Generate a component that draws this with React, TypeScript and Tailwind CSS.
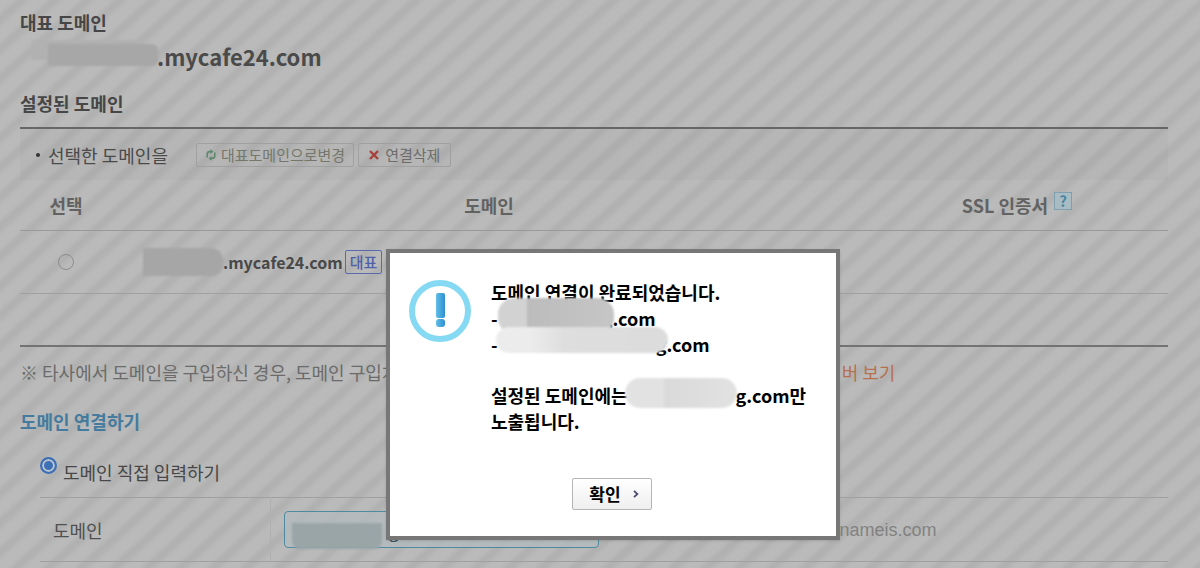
import React from 'react';

function RefreshIcon() {
    return (
        <svg viewBox="0 0 12 14" className="w-3 h-3.5 shrink-0" fill="none" stroke="#5f8a70" strokeWidth="1.6">
            <path d="M2.2 9.5V6.2Q2.2 3.6 4.8 3.6H6" />
            <path d="M5.4 1.2 8.4 3.6 5.4 6Z" fill="#5f8a70" stroke="none" />
            <path d="M9.8 4.5v3.3q0 2.6-2.6 2.6H6" />
            <path d="M6.6 8 3.6 10.4 6.6 12.8Z" fill="#5f8a70" stroke="none" />
        </svg>
    );
}

function CrossIcon() {
    return (
        <svg viewBox="0 0 10 10" className="w-2.5 h-2.5 shrink-0" stroke="#a8403c" strokeWidth="2.4">
            <path d="M1 1 9 9M9 1 1 9" />
        </svg>
    );
}

function NoticeIcon() {
    return (
        <svg viewBox="0 0 62 62" className="w-[62px] h-[62px] shrink-0">
            <defs>
                <linearGradient id="mark" x1="0" x2="1">
                    <stop offset="0" stopColor="#62bfe8" />
                    <stop offset="1" stopColor="#2c8fd0" />
                </linearGradient>
            </defs>
            <circle cx="31" cy="31" r="28" fill="none" stroke="#85d9f3" strokeWidth="6" />
            <rect x="27" y="13" width="9" height="25" rx="2" fill="url(#mark)" />
            <rect x="27" y="39" width="9" height="8" rx="3" fill="url(#mark)" />
        </svg>
    );
}

function Smudge({ className }: { className: string }) {
    return <span aria-hidden="true" className={`absolute blur-[1px] ${className}`} />;
}

function DomainTable() {
    return (
        <table className="w-full table-fixed border-collapse text-[#626262]">
            <thead>
                <tr className="h-[50px] border-b border-[#999]">
                    <th className="w-[92px] font-bold">선택</th>
                    <th className="font-bold">도메인</th>
                    <th className="w-[302px] font-bold">
                        <span className="flex justify-center gap-1.5">
                            SSL 인증서
                            <button
                                type="button"
                                aria-label="SSL 인증서 도움말"
                                className="w-[18px] h-[18px] border border-[#7fa0ae] bg-[#a9bcc4] text-[#4a86a3] text-[15px] leading-4 font-bold"
                            >
                                ?
                            </button>
                        </span>
                    </th>
                </tr>
            </thead>
            <tbody>
                <tr className="h-[63px] border-b border-[#a0a0a0]">
                    <td>
                        <input
                            type="radio"
                            name="selected"
                            aria-label="mycafe24.com 선택"
                            className="appearance-none block mx-auto w-4 h-4 rounded-full border border-[#8c8c8c]"
                        />
                    </td>
                    <td className="pl-[31px]">
                        <div className="flex items-center gap-0.5">
                            <span className="relative w-[78px] h-7">
                                <Smudge className="inset-y-0 left-0 w-20 bg-[#a6a6a6] rounded-r-xl" />
                            </span>
                            <strong className="text-base leading-6 font-bold text-[#484848]">.mycafe24.com</strong>
                            <span className="border border-[#5a6bac] rounded-xs px-1 text-[15px] leading-[22px] text-[#4f62a8] font-medium">대표</span>
                        </div>
                    </td>
                    <td />
                </tr>
            </tbody>
            <tfoot>
                <tr className="h-[53px] border-b-2 border-[#737373]">
                    <td colSpan={3} />
                </tr>
            </tfoot>
        </table>
    );
}

function ConnectForm() {
    return (
        <section>
            <h2 className="mt-[23px] font-bold text-[#457b9e]">도메인 연결하기</h2>
            <div className="pl-5">
                <label className="mt-[23px] flex items-start gap-1.5 text-[#474747]">
                    <input
                        type="radio"
                        name="method"
                        defaultChecked
                        className="appearance-none w-[17px] h-[17px] rounded-full border-2 border-[#3e70b5] bg-[#3e70b5] shadow-[inset_0_0_0_2px_#bcc4cf]"
                    />
                    <span className="mt-0.5">도메인 직접 입력하기</span>
                </label>
                <table className="mt-3 w-full border-collapse border-y border-[#a0a0a0]">
                    <tbody>
                        <tr className="h-16">
                            <th className="w-[230px] pl-[13px] text-left font-normal text-[#505050] border-r border-[#b0b0b0]">
                                <label htmlFor="domain">도메인</label>
                            </th>
                            <td className="pl-[13px]">
                                <div className="flex items-center">
                                    <div className="relative w-[315px]">
                                        <input
                                            id="domain"
                                            type="text"
                                            defaultValue="g"
                                            className="block w-full h-[37px] pl-[104px] pr-2 rounded-sm border border-[#4f8ba0] bg-[#b3bcbf]/70 text-[#3c5560]"
                                        />
                                        <Smudge className="left-2 top-3 w-[90px] h-[26px] bg-[#9aa5a8] rounded-b-lg" />
                                    </div>
                                    <span className="w-[338px] text-right text-[#828282] font-['Liberation_Sans',sans-serif]">nameis.com</span>
                                </div>
                            </td>
                        </tr>
                    </tbody>
                </table>
            </div>
        </section>
    );
}

function NoticeDialog() {
    return (
        <div
            role="alertdialog"
            aria-labelledby="notice"
            className="w-[454px] border-4 border-[#777] bg-white px-[19px] pt-[27px] pb-[26px] text-black shadow-sm"
        >
            <div className="flex gap-5">
                <NoticeIcon />
                <div id="notice" className="relative flex-1 -mt-px font-bold whitespace-nowrap">
                    <p>도메인 연결이 완료되었습니다.</p>
                    <p className="flex">
                        -<span className="w-[104px]" />g.com
                    </p>
                    <p className="flex">
                        -<span className="w-[158px]" />g.com
                    </p>
                    <p className="mt-[25px] flex">
                        설정된 도메인에는<span className="w-[108px]" />g.com만
                    </p>
                    <p>노출됩니다.</p>
                    <Smudge className="left-[7px] top-[19px] w-[116px] h-9 rounded-2xl bg-linear-to-r from-[#d2d2d2] from-25% via-[#bcbcbc] via-25% to-[#c6c6c6]" />
                    <Smudge className="left-[5px] top-12 w-[172px] h-[26px] rounded-2xl bg-linear-to-r from-[#ececec] from-20% via-[#dedede] via-40% to-[#dcdcdc]" />
                    <Smudge className="left-[134px] top-[99px] w-[112px] h-[30px] rounded-2xl bg-linear-to-r from-[#e2e2e2] from-35% via-[#dadada] via-35% to-[#e2e2e2]" />
                </div>
            </div>
            <div className="mt-11 flex justify-center">
                <button
                    type="button"
                    className="flex items-center gap-3 h-8 pl-4 pr-3 mr-0.5 rounded-xs border border-[#b5b5b5] bg-linear-to-b from-white to-[#efefef] text-[17px] font-bold"
                >
                    확인
                    <svg viewBox="0 0 6 8" className="w-1.5 h-2" fill="none" stroke="#4a4a70" strokeWidth="1.8">
                        <path d="M1 .8 4.4 4 1 7.2" />
                    </svg>
                </button>
            </div>
        </div>
    );
}

export default function App() {
    return (
        <div className="relative min-h-screen overflow-hidden bg-[#b8b9b8] bg-[repeating-linear-gradient(138deg,#bababa_0px,#b9bab9_8px,#b0b1b0_13px,#b0b1b0_16px,#bababa_22px)] text-lg leading-[26px] font-['Noto_Sans_CJK_KR',sans-serif]">
            <main className="pl-5 pr-8 pt-[9px]">
                <h2 className="font-bold text-[#464646]">대표 도메인</h2>
                <div className="mt-[5px] flex items-center">
                    <span className="relative w-[137px] h-8">
                        <Smudge className="left-3 top-0 w-[110px] h-5 bg-[#b1b1b1]" />
                        <Smudge className="left-7 top-1 w-[110px] h-[22px] bg-[#a7a7a7] rounded-r-md" />
                    </span>
                    <strong className="text-[22px] leading-8 font-bold text-[#4a4a4a]">.mycafe24.com</strong>
                </div>
                <h2 className="mt-[18px] pb-[11px] font-bold text-[#464646] border-b-2 border-[#666]">설정된 도메인</h2>

                <div className="flex items-center h-[51px] pl-4 bg-black/2 text-[#4a4a4a]">
                    <span className="w-1 h-1 mr-2 rounded-full bg-[#333]" />
                    선택한 도메인을
                    <button type="button" className="ml-7 h-6 px-2 flex items-center gap-1 border border-[#a0a0a0] rounded-xs text-[15px] leading-5 text-[#74776a]">
                        <RefreshIcon />
                        대표도메인으로변경
                    </button>
                    <button type="button" className="ml-1 h-6 px-2.5 flex items-center gap-1.5 border border-[#a0a0a0] rounded-xs text-[15px] leading-5 text-[#6c6c6c]">
                        <CrossIcon />
                        연결삭제
                    </button>
                </div>

                <DomainTable />

                <p className="mt-3 flex whitespace-nowrap text-[#6b6b6b]">
                    <span className="w-[772px]">※ 타사에서 도메인을 구입하신 경우, 도메인 구입처</span>
                    <a href="#nameserver" className="text-[#b5714f]">네임서버 보기</a>
                </p>

                <ConnectForm />
            </main>

            <div className="absolute inset-0 flex justify-center items-start pt-[249px] pl-[26px]">
                <NoticeDialog />
            </div>
        </div>
    );
}
